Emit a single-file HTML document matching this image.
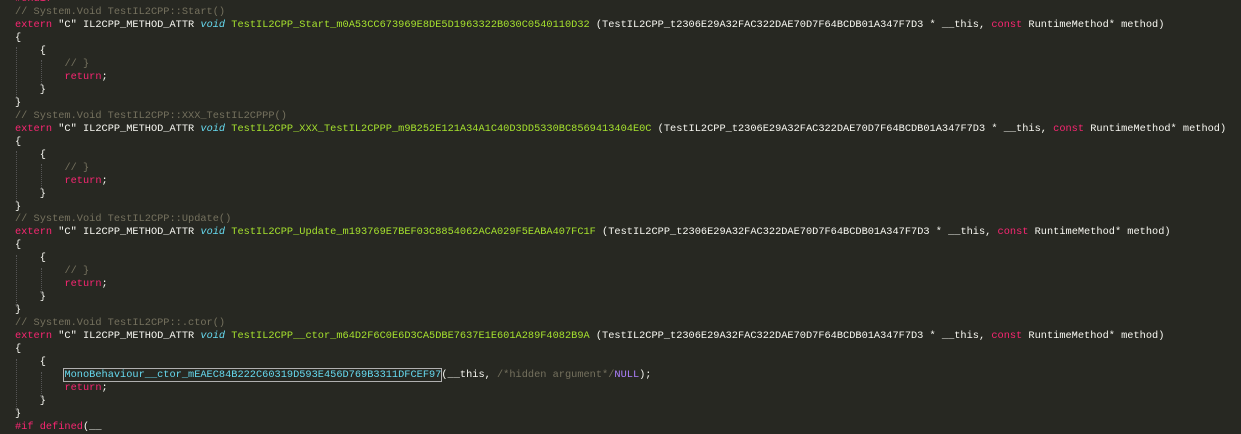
<!DOCTYPE html>
<html><head><meta charset="utf-8"><style>
html,body{margin:0;padding:0;background:#272822;width:1241px;height:424px;overflow:hidden}
pre{margin:0;position:absolute;left:15px;top:-7px;font-family:"Liberation Mono",monospace;font-size:10.3px;line-height:12.97px;color:#f8f8f2}
.k{color:#f92672}.t{color:#66d9ef;font-style:italic}.f{color:#a6e22e}.c{color:#75715e}.n{color:#ae81ff}.s{color:#e6db74}.b{color:#66d9ef}
.box{outline:1px solid #b0b0b0;outline-offset:0px;color:#66d9ef}
.g{position:absolute;width:0;border-left:1px dotted #555}
</style></head><body>
<pre><span class="k">#endif</span>
<span class="c">// System.Void TestIL2CPP::Start()</span>
<span class="k">extern</span> "C" IL2CPP_METHOD_ATTR <span class="t">void</span> <span class="f">TestIL2CPP_Start_m0A53CC673969E8DE5D1963322B030C0540110D32</span> (TestIL2CPP_t2306E29A32FAC322DAE70D7F64BCDB01A347F7D3 * __this, <span class="k">const</span> RuntimeMethod* method)
{
    {
        <span class="c">// }</span>
        <span class="k">return</span>;
    }
}
<span class="c">// System.Void TestIL2CPP::XXX_TestIL2CPPP()</span>
<span class="k">extern</span> "C" IL2CPP_METHOD_ATTR <span class="t">void</span> <span class="f">TestIL2CPP_XXX_TestIL2CPPP_m9B252E121A34A1C40D3DD5330BC8569413404E0C</span> (TestIL2CPP_t2306E29A32FAC322DAE70D7F64BCDB01A347F7D3 * __this, <span class="k">const</span> RuntimeMethod* method)
{
    {
        <span class="c">// }</span>
        <span class="k">return</span>;
    }
}
<span class="c">// System.Void TestIL2CPP::Update()</span>
<span class="k">extern</span> "C" IL2CPP_METHOD_ATTR <span class="t">void</span> <span class="f">TestIL2CPP_Update_m193769E7BEF03C8854062ACA029F5EABA407FC1F</span> (TestIL2CPP_t2306E29A32FAC322DAE70D7F64BCDB01A347F7D3 * __this, <span class="k">const</span> RuntimeMethod* method)
{
    {
        <span class="c">// }</span>
        <span class="k">return</span>;
    }
}
<span class="c">// System.Void TestIL2CPP::.ctor()</span>
<span class="k">extern</span> "C" IL2CPP_METHOD_ATTR <span class="t">void</span> <span class="f">TestIL2CPP__ctor_m64D2F6C0E6D3CA5DBE7637E1E601A289F4082B9A</span> (TestIL2CPP_t2306E29A32FAC322DAE70D7F64BCDB01A347F7D3 * __this, <span class="k">const</span> RuntimeMethod* method)
{
    {
        <span class="box">MonoBehaviour__ctor_mEAEC84B222C60319D593E456D769B3311DFCEF97</span>(__this, <span class="c">/*hidden argument*/</span><span class="n">NULL</span>);
        <span class="k">return</span>;
    }
}
<span class="k">#if defined</span>(__</pre>
<div class="g" style="left:16px;top:47px;height:52px"></div>
<div class="g" style="left:41px;top:60px;height:26px"></div>
<div class="g" style="left:16px;top:151px;height:52px"></div>
<div class="g" style="left:41px;top:164px;height:26px"></div>
<div class="g" style="left:16px;top:255px;height:52px"></div>
<div class="g" style="left:41px;top:268px;height:26px"></div>
<div class="g" style="left:16px;top:359px;height:52px"></div>
<div class="g" style="left:41px;top:372px;height:26px"></div>
</body></html>
